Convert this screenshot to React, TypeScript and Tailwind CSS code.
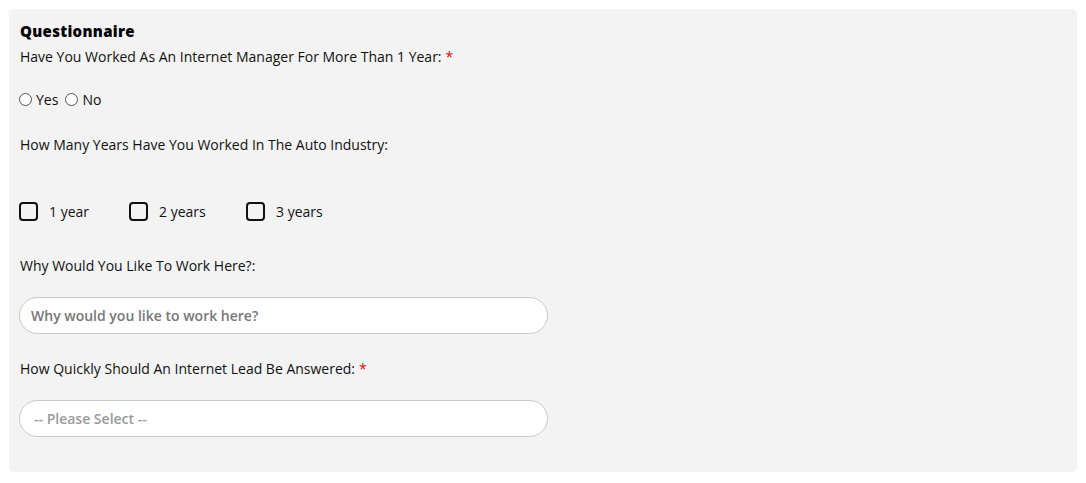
import React from "react";

const font = { fontFamily: '"Open Sans", "Liberation Sans", sans-serif' };

const Label = ({ text, required }: { text: string; required?: boolean }) => (
  <p className="text-[14px] leading-[20px] text-[#111]">
    {text}
    {required && <span className="text-[#e00] ml-1">*</span>}
  </p>
);

const Radio = ({ label }: { label: string }) => (
  <label className="flex items-center gap-[4px]">
    <span className="w-[13px] h-[13px] rounded-full border border-[#555] bg-white" />
    <span className="text-[14px] text-[#111]">{label}</span>
  </label>
);

const Box = ({ label, w }: { label: string; w: string }) => (
  <label className={`flex items-center gap-[11px] ${w}`}>
    <span className="w-[19px] h-[19px] rounded-[4px] border-2 border-[#111] bg-transparent" />
    <span className="text-[14px] text-[#111]">{label}</span>
  </label>
);

export default function App() {
  return (
    <div className="p-[9px] bg-white" style={font}>
      <div className="bg-[#f3f3f3] rounded-[5px] pl-[10px] pr-4 pt-[12px] pb-[35px] w-[1068px]">
        <h2 className="pl-[1px] text-[15px] leading-[20px] font-extrabold text-black tracking-[0.3px]">
          Questionnaire
        </h2>
        <div className="mt-[6px] pl-[1px]">
          <Label text="Have You Worked As An Internet Manager For More Than 1 Year:" required />
        </div>
        <div className="mt-[22px] flex items-center gap-[7px]">
          <Radio label="Yes" />
          <Radio label="No" />
        </div>
        <div className="mt-[25px] pl-[1px]">
          <Label text="How Many Years Have You Worked In The Auto Industry:" />
        </div>
        <div className="mt-[46px] flex items-center">
          <Box label="1 year" w="w-[110px]" />
          <Box label="2 years" w="w-[117px]" />
          <Box label="3 years" w="w-[100px]" />
        </div>
        <div className="mt-[34px] pl-[1px]">
          <Label text="Why Would You Like To Work Here?:" />
        </div>
        <input
          type="text"
          placeholder="Why would you like to work here?"
          className="mt-[21px] block w-[529px] h-[37px] rounded-full border border-[#c8c8c8] bg-white px-[11px] text-[14px] font-semibold placeholder:text-[#777] outline-none"
          style={font}
        />
        <div className="mt-[25px] pl-[1px]">
          <Label text="How Quickly Should An Internet Lead Be Answered:" required />
        </div>
        <div className="mt-[21px] w-[529px] h-[37px] rounded-full border border-[#c8c8c8] bg-white px-[14px] flex items-center">
          <span className="text-[14px] font-semibold text-[#9a9a9a]">-- Please Select --</span>
        </div>
      </div>
    </div>
  );
}
